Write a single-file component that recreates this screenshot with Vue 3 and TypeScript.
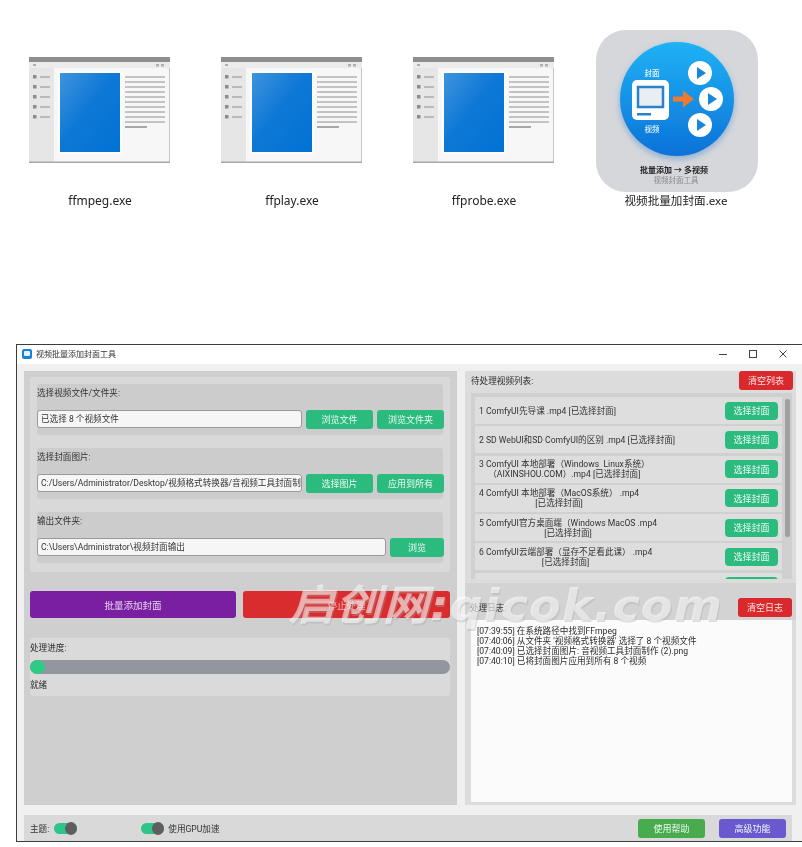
<template>
  <div class="page">
    <!-- desktop icons -->
    <section class="desktop">
      <div v-for="name in exeFiles" :key="name" class="file">
        <svg class="exe-icon" viewBox="0 0 141 106" width="141" height="106">
          <defs>
            <linearGradient :id="`doc-${name}`" x1="0" y1="0" x2="1" y2="1">
              <stop offset="0" stop-color="#3f94dc" />
              <stop offset="0.45" stop-color="#0f78d6" />
              <stop offset="1" stop-color="#0072d4" />
            </linearGradient>
          </defs>
          <rect x="0.5" y="0.5" width="140" height="105" fill="#f7f7f7" stroke="#c4c4c4" />
          <rect x="0" y="0" width="141" height="5" fill="#8f8f8f" />
          <rect x="0" y="5" width="141" height="6" fill="#ececec" />
          <rect x="0" y="11" width="25" height="94" fill="#e6e6e6" />
          <rect x="0" y="104.5" width="141" height="1.5" fill="#a8a8a8" />
          <rect x="31" y="16" width="60" height="79" fill="#fff" stroke="#fff" stroke-width="3" />
          <rect x="31" y="16" width="60" height="79" :fill="`url(#doc-${name})`" />
          <g fill="#8c8c8c">
            <rect v-for="y in sideRows" :key="y" x="4" :y="y" width="3.5" height="3.5" />
          </g>
          <g stroke="#8e8e8e" stroke-width="1">
            <line v-for="y in sideRows" :key="y" x1="11" :y1="y + 2" x2="21" :y2="y + 2" />
            <line v-for="y in textRows" :key="y" x1="96" :y1="y" x2="136" :y2="y" />
            <line x1="96" y1="70" x2="118" y2="70" stroke-width="1.5" />
          </g>
          <g fill="#b0b0b0">
            <rect x="127" y="7" width="3" height="2.5" />
            <rect x="132" y="7" width="3" height="2.5" />
            <rect x="4" y="7" width="3" height="2" />
          </g>
        </svg>
        <span class="file-name">{{ name }}</span>
      </div>
      <div class="file file--app">
        <svg class="app-icon" viewBox="0 0 162 162" width="162" height="162">
          <defs>
            <linearGradient id="disc" x1="0" y1="0" x2="0" y2="1">
              <stop offset="0" stop-color="#20b2f5" />
              <stop offset="1" stop-color="#0c72d8" />
            </linearGradient>
            <filter id="soft" x="-20%" y="-20%" width="140%" height="140%">
              <feDropShadow dx="0" dy="3" stdDeviation="3" flood-color="#1a6fc0" flood-opacity="0.4" />
            </filter>
          </defs>
          <rect x="0" y="0" width="162" height="162" rx="30" fill="#d6d7db" />
          <circle cx="81" cy="69" r="57" fill="url(#disc)" filter="url(#soft)" />
          <rect x="36" y="50" width="37" height="40" rx="5" fill="#fff" />
          <rect x="42" y="57" width="25" height="20" fill="#e9eef3" stroke="#2a82cc" stroke-width="2.5" />
          <rect x="41" y="83" width="14" height="2.5" fill="#2a82cc" />
          <path d="M77 66.5h10v-6l11 8.5-11 8.500v-6H77z" fill="#f07a2c" />
          <g v-for="p in playButtons" :key="p.y">
            <circle :cx="p.x" :cy="p.y" r="12" fill="#fff" />
            <path :d="`M${p.x - 3} ${p.y - 6}l9 6-9 6z`" fill="#1a86d8" />
          </g>
          <text x="56" y="46" class="disc-label">封面</text>
          <text x="56" y="102" class="disc-label">视频</text>
          <text x="78" y="143" class="app-title">批量添加 → 多视频</text>
          <text x="80" y="153" class="app-sub">视频封面工具</text>
        </svg>
        <span class="file-name">视频批量加封面.exe</span>
      </div>
    </section>

    <!-- app window -->
    <section class="window">
      <header class="titlebar">
        <span class="app-mark"><i /></span>
        <span class="title-text">视频批量添加封面工具</span>
        <div class="win-controls">
          <svg viewBox="0 0 10 10" width="10" height="10"><path d="M1 5.500h8" stroke="#444" fill="none" /></svg>
          <svg viewBox="0 0 10 10" width="10" height="10"><rect x="1.500" y="1.500" width="7" height="7" stroke="#444" fill="none" /></svg>
          <svg viewBox="0 0 10 10" width="10" height="10"><path d="M1.500 1.500l7 7M8.500 1.500l-7 7" stroke="#444" fill="none" /></svg>
        </div>
      </header>

      <div class="body">
        <div class="main">
          <div class="left">
            <div class="form-card">
              <div v-for="g in formGroups" :key="g.label" class="group">
                <div class="group-label">{{ g.label }}</div>
                <div class="group-row">
                  <div class="input">{{ g.value }}</div>
                  <button v-for="b in g.buttons" :key="b" class="btn btn--green" :class="{ 'btn--wide': g.buttons.length > 1 }">{{ b }}</button>
                </div>
              </div>
            </div>

            <div class="actions">
              <button class="action action--purple">批量添加封面</button>
              <button class="action action--red">停止处理</button>
            </div>

            <div class="progress-card">
              <div class="progress-label">处理进度:</div>
              <div class="progress-track"><div class="progress-fill" :style="{ width: progress + 'px' }" /></div>
              <div class="progress-status">就绪</div>
            </div>
          </div>

          <div class="right">
            <div class="pane-head">
              <span>待处理视频列表:</span>
              <button class="btn btn--red">清空列表</button>
            </div>
            <div class="list">
              <div class="rows">
                <div v-for="(row, i) in videoRows" :key="i" class="row">
                  <span class="row-text"><template v-for="(line, j) in row" :key="j"><br v-if="j > 0" />{{ line }}</template></span>
                  <button class="btn btn--green btn--pick">选择封面</button>
                </div>
              </div>
              <div class="scrollbar" />
            </div>
            <div class="pane-head pane-head--log">
              <span>处理日志:</span>
              <button class="btn btn--red">清空日志</button>
            </div>
            <div class="log">
              <div v-for="line in logLines" :key="line">{{ line }}</div>
            </div>
          </div>
        </div>

        <footer class="bottom">
          <span class="opt">主题:</span>
          <span class="toggle"><i /></span>
          <span class="toggle toggle--gpu"><i /></span>
          <span class="opt">使用GPU加速</span>
          <span class="spacer" />
          <button class="btn btn--foot btn--help">使用帮助</button>
          <button class="btn btn--foot btn--violet">高级功能</button>
        </footer>
      </div>

      <div class="watermark">启创网:qicok.com</div>
    </section>
  </div>
</template>

<script setup lang="ts">
interface FormGroup {
  label: string
  value: string
  buttons: string[]
}

const exeFiles = ['ffmpeg.exe', 'ffplay.exe', 'ffprobe.exe']
const sideRows = [18, 28, 38, 48, 58]
const textRows = [20, 25, 30, 35, 40, 45, 50, 55, 60, 65]
const playButtons = [
  { x: 104, y: 43 },
  { x: 115, y: 69 },
  { x: 104, y: 95 }
]

const formGroups: FormGroup[] = [
  { label: '选择视频文件/文件夹:', value: '已选择 8 个视频文件', buttons: ['浏览文件', '浏览文件夹'] },
  { label: '选择封面图片:', value: 'C:/Users/Administrator/Desktop/视频格式转换器/音视频工具封面制作 (2).png', buttons: ['选择图片', '应用到所有'] },
  { label: '输出文件夹:', value: 'C:\\Users\\Administrator\\视频封面输出', buttons: ['浏览'] }
]

const videoRows: string[][] = [
  ['1 ComfyUI先导课 .mp4 [已选择封面]'],
  ['2 SD WebUI和SD ComfyUI的区别 .mp4 [已选择封面]'],
  ['3 ComfyUI 本地部署（Windows  Linux系统）', '（AIXINSHOU.COM）.mp4 [已选择封面]'],
  ['4 ComfyUI 本地部署（MacOS系统） .mp4', '[已选择封面]'],
  ['5 ComfyUI官方桌面端（Windows MacOS .mp4', '[已选择封面]'],
  ['6 ComfyUI云端部署（显存不足看此课） .mp4', '[已选择封面]'],
  ['7 ComfyUI .mp4 [已选择封面]']
]

const logLines = [
  '[07:39:55] 在系统路径中找到FFmpeg',
  "[07:40:06] 从文件夹 '视频格式转换器' 选择了 8 个视频文件",
  '[07:40:09] 已选择封面图片: 音视频工具封面制作 (2).png',
  '[07:40:10] 已将封面图片应用到所有 8 个视频'
]

const progress = 15
</script>

<style>
html, body { margin: 0; background: #fff; }
</style>

<style scoped>
.page {
  width: 802px; height: 847px; overflow: hidden; background: #fff;
  font-family: Roboto, "Noto Sans CJK SC", sans-serif;
  font-size: 8.6px; color: #2a2a2a; filter: blur(0.35px);
}

.desktop { display: flex; height: 344px; padding-left: 4px; box-sizing: border-box; }
.file { width: 192px; display: flex; flex-direction: column; align-items: center; padding-top: 57px; box-sizing: border-box; }
.exe-icon { display: block; margin-right: 1px; }
.file-name { margin-top: 30px; font-size: 12px; line-height: 16px; color: #222; font-family: "Noto Sans", "Noto Sans CJK SC", sans-serif; }
.file--app { padding-top: 30px; }
.file--app .file-name { margin-top: 1px; font-size: 11.6px; }
.app-icon { display: block; margin-left: 2px; }
.disc-label { font-size: 7.5px; fill: #e8f4ff; text-anchor: middle; font-weight: 500; }
.app-title { font-size: 8px; fill: #222; text-anchor: middle; font-weight: 700; }
.app-sub { font-size: 7.5px; fill: #8a8a8a; text-anchor: middle; }

.window {
  position: relative; margin-left: 16px; width: 786px; height: 498px; box-sizing: border-box;
  border: 1px solid #3c3c3c; border-right: 0; display: flex; flex-direction: column; background: #f0f0f0;
}
.titlebar { height: 19px; background: #fff; display: flex; align-items: center; padding: 0 0 2px 5px; box-sizing: border-box; }
.app-mark { width: 10px; height: 10px; border-radius: 2px; background: #1583d8; display: flex; align-items: center; justify-content: center; }
.app-mark i { width: 6px; height: 5px; background: #e8f2fb; border-radius: 1px; }
.title-text { margin-left: 4px; color: #333; font-size: 8px; }
.win-controls { margin-left: auto; display: flex; gap: 20px; padding-right: 14px; }
.win-controls svg { display: block; }

.body { flex: 1; display: flex; flex-direction: column; padding: 7px 6px 0 7px; min-height: 0; }
.main { display: flex; gap: 8px; height: 434px; }

.left { width: 433px; background: #cfcfcf; padding: 6px; box-sizing: border-box; }
.form-card { width: 420px; height: 195px; background: #d9d9d9; padding: 7px; box-sizing: border-box; display: flex; flex-direction: column; gap: 13px; border-radius: 3px; }
.group { height: 51px; background: #cccccc; border-radius: 3px; }
.group-label { height: 26px; line-height: 18px; color: #333; }
.group-row { display: flex; gap: 4px; align-items: flex-start; height: 19px; width: 407px; }
.input {
  flex: 1; min-width: 0; height: 18px; line-height: 16px; box-sizing: border-box; background: #f6f6f6;
  border: 1px solid #9a9a9a; border-radius: 3px; padding: 0 3px; white-space: nowrap; overflow: hidden; color: #333;
}

.btn { border: 0; padding: 0; font: inherit; font-size: 9px; color: #eef8f3; border-radius: 3px; display: block; }
.btn--green { width: 54px; height: 19px; background: #2bbb7f; flex: none; }
.btn--wide { width: 67px; }
.btn--red { width: 54px; height: 19px; background: #d9292c; color: #fbe3e3; }
.btn--pick { width: 53px; height: 18px; border-radius: 4px; }
.btn--foot { width: 67px; height: 19px; }
.btn--help { background: #48ab4e; }
.btn--violet { background: #6a58cf; margin-left: 14px; }

.actions { display: flex; gap: 7px; margin-top: 19px; width: 420px; }
.action { height: 27px; border: 0; border-radius: 3px; font: inherit; font-size: 9.5px; color: #e6d4ec; }
.action--purple { width: 206px; background: #7a1fa2; }
.action--red { width: 207px; background: #d92c2e; color: #f0b8b8; }

.progress-card { margin-top: 20px; width: 420px; height: 58px; background: #dadada; border-radius: 3px; }
.progress-label { height: 22px; line-height: 20px; }
.progress-track { height: 14px; border-radius: 7px; background: #92979f; overflow: hidden; }
.progress-fill { height: 100%; background: #2ecb86; border-radius: 7px; }
.progress-status { line-height: 22px; }

.right { width: 331px; background: #dcdcdc; padding-left: 6px; box-sizing: border-box; display: flex; flex-direction: column; }
.pane-head { width: 322px; height: 20px; display: flex; justify-content: space-between; align-items: center; flex: none; margin-top: -1px; }
.pane-head--log { margin: 4px 0 0 -6px; padding: 14px 3px 3px 5px; width: 331px; height: 37px; box-sizing: border-box; background: #d3d3d3; }
.pane-head--log .btn { margin-right: 1px; }
.list { width: 321px; height: 186px; background: #d0d0d0; position: relative; overflow: hidden; flex: none; margin-top: 3px; }
.rows { display: flex; flex-direction: column; gap: 2.3px; padding: 4px 0 0 4px; }
.row { width: 307px; height: 27px; flex: none; background: #dedede; display: flex; align-items: center; justify-content: space-between; padding: 0 4px; box-sizing: border-box; }
.row-text { text-align: center; line-height: 10px; white-space: pre; color: #333; }
.scrollbar { position: absolute; left: 314px; top: 6px; width: 5px; height: 138px; border-radius: 2px; background: #a0a0a0; }
.log { width: 321px; flex: 1; background: #fbfbfb; padding: 6px; box-sizing: border-box; line-height: 10px; color: #2c2c2c; margin-bottom: 3px; }

.bottom { margin-top: 10px; width: 768px; height: 26px; background: #d9d9d9; display: flex; align-items: center; padding: 0 6px; box-sizing: border-box; }
.opt { color: #333; }
.toggle { width: 23px; height: 11px; margin-left: 5px; background: #2fc489; border-radius: 6px; position: relative; }
.toggle i { position: absolute; right: 0; top: -1px; width: 12px; height: 13px; border-radius: 50%; background: #5e5e5e; }
.toggle--gpu { margin-left: 64px; margin-right: 4px; }
.spacer { flex: 1; }

.watermark {
  position: absolute; left: 271px; top: 237px; font-size: 42px; line-height: 48px; font-weight: 700; font-style: italic;
  font-family: "DejaVu Sans", "Noto Sans CJK SC", sans-serif; color: rgba(255,255,255,0.55); white-space: nowrap;
  letter-spacing: 1px; text-shadow: 1px 2px 0 rgba(170,170,170,0.35);
  transform: scaleX(1.1); transform-origin: left center;
}
</style>
